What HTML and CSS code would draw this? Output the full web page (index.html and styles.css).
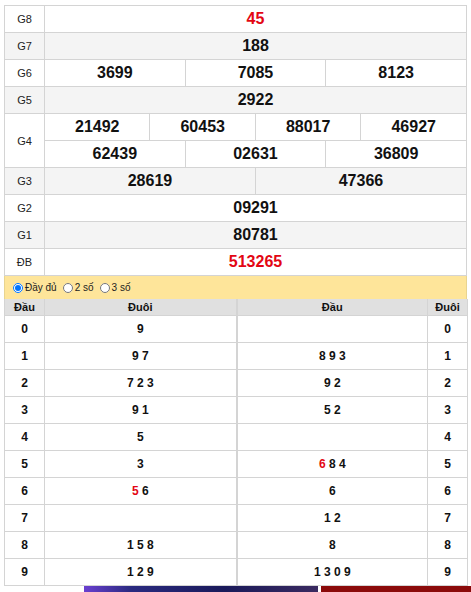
FILE: index.html
```html
<!DOCTYPE html>
<html>
<head>
<meta charset="utf-8">
<link rel="stylesheet" href="styles.css">
</head>
<body>
<div class="wrap">
  <table class="kq">
    <colgroup>
      <col class="c-lbl">
      <col><col><col><col><col><col><col><col><col><col><col><col>
    </colgroup>
    <tr><td class="lbl">G8</td><td colspan="12" class="num red">45</td></tr>
    <tr class="alt"><td class="lbl">G7</td><td colspan="12" class="num">188</td></tr>
    <tr><td class="lbl">G6</td><td colspan="4" class="num">3699</td><td colspan="4" class="num">7085</td><td colspan="4" class="num">8123</td></tr>
    <tr class="alt"><td class="lbl">G5</td><td colspan="12" class="num">2922</td></tr>
    <tr><td class="lbl" rowspan="2">G4</td><td colspan="3" class="num">21492</td><td colspan="3" class="num">60453</td><td colspan="3" class="num">88017</td><td colspan="3" class="num">46927</td></tr>
    <tr><td colspan="4" class="num">62439</td><td colspan="4" class="num">02631</td><td colspan="4" class="num">36809</td></tr>
    <tr class="alt"><td class="lbl">G3</td><td colspan="6" class="num">28619</td><td colspan="6" class="num">47366</td></tr>
    <tr><td class="lbl">G2</td><td colspan="12" class="num">09291</td></tr>
    <tr class="alt"><td class="lbl">G1</td><td colspan="12" class="num">80781</td></tr>
    <tr><td class="lbl">ĐB</td><td colspan="12" class="num red">513265</td></tr>
  </table>
  <div class="opts">
    <label class="opt"><input type="radio" name="m" checked>Đầy đủ</label>
    <label class="opt"><input type="radio" name="m">2 số</label>
    <label class="opt"><input type="radio" name="m">3 số</label>
  </div>
  <table class="loto">
    <colgroup><col class="l1"><col class="l2"><col class="l3"><col class="l4"></colgroup>
    <tr class="hd"><th>Đầu</th><th class="mid">Đuôi</th><th>Đầu</th><th>Đuôi</th></tr>
    <tr><td class="k">0</td><td class="mid">9</td><td></td><td class="k">0</td></tr>
    <tr><td class="k">1</td><td class="mid">9 7</td><td>8 9 3</td><td class="k">1</td></tr>
    <tr><td class="k">2</td><td class="mid">7 2 3</td><td>9 2</td><td class="k">2</td></tr>
    <tr><td class="k">3</td><td class="mid">9 1</td><td>5 2</td><td class="k">3</td></tr>
    <tr><td class="k">4</td><td class="mid">5</td><td></td><td class="k">4</td></tr>
    <tr><td class="k">5</td><td class="mid">3</td><td><span class="red">6</span> 8 4</td><td class="k">5</td></tr>
    <tr><td class="k">6</td><td class="mid"><span class="red">5</span> 6</td><td>6</td><td class="k">6</td></tr>
    <tr><td class="k">7</td><td class="mid"></td><td>1 2</td><td class="k">7</td></tr>
    <tr><td class="k">8</td><td class="mid">1 5 8</td><td>8</td><td class="k">8</td></tr>
    <tr><td class="k">9</td><td class="mid">1 2 9</td><td>1 3 0 9</td><td class="k">9</td></tr>
  </table>
</div>
<div class="ads">
  <div class="ad ad-dark"></div>
  <div class="ad ad-red"></div>
</div>
</body>
</html>
```
FILE: styles.css
```css
html, body {
  margin: 0;
  padding: 0;
  background: #fff;
  font-family: "Liberation Sans", Arial, sans-serif;
  color: #111;
  overflow: hidden;
}
.wrap {
  margin: 5px 0 0 4px;
  width: 463px;
}
table {
  border-collapse: collapse;
  table-layout: fixed;
  width: 463px;
}
.kq td {
  border: 1px solid #d4d4d4;
  height: 26px;
  padding: 0;
  text-align: center;
  vertical-align: middle;
}
.c-lbl { width: 40px; }
.kq tr.alt td { background: #f4f4f4; }
.lbl {
  font-size: 11px;
  color: #222;
}
.num {
  font-size: 16px;
  font-weight: bold;
  color: #111;
}
.red { color: #e30613; }
.opts {
  display: flex;
  align-items: center;
  height: 23px;
  background: #fee59a;
  border-left: 1px solid #e8d490;
  border-right: 1px solid #e8d490;
  box-sizing: border-box;
  padding-left: 5px;
}
.opt {
  display: flex;
  align-items: center;
  font-size: 10px;
  color: #222;
  margin-right: 3px;
}
.opt input {
  width: 10px;
  height: 10px;
  margin: 0 2px 0 3px;
}
.loto .l1 { width: 40px; }
.loto .l2 { width: 192px; }
.loto .l3 { width: 191px; }
.loto .l4 { width: 40px; }
.loto th {
  background: #e0e0e0;
  height: 16px;
  padding: 0;
  font-size: 11px;
  font-weight: bold;
  color: #111;
  border: 1px solid #d4d4d4;
  border-top: none;
}
.loto td {
  border: 1px solid #d4d4d4;
  height: 26px;
  padding: 0;
  text-align: center;
  font-size: 12px;
  font-weight: bold;
  color: #111;
}
.loto .mid { border-right: 2px solid #d4d4d4; }
.ads {
  display: flex;
  margin: 0 0 0 84px;
  gap: 3px;
}
.ad { height: 8px; }
.ad-dark {
  width: 234px;
  background: linear-gradient(90deg, #6a3fd0 0%, #2a2a80 20%, #1a1a5a 60%, #3a2a60 100%);
}
.ad-red {
  width: 150px;
  background: #8b0a0a;
}
```
